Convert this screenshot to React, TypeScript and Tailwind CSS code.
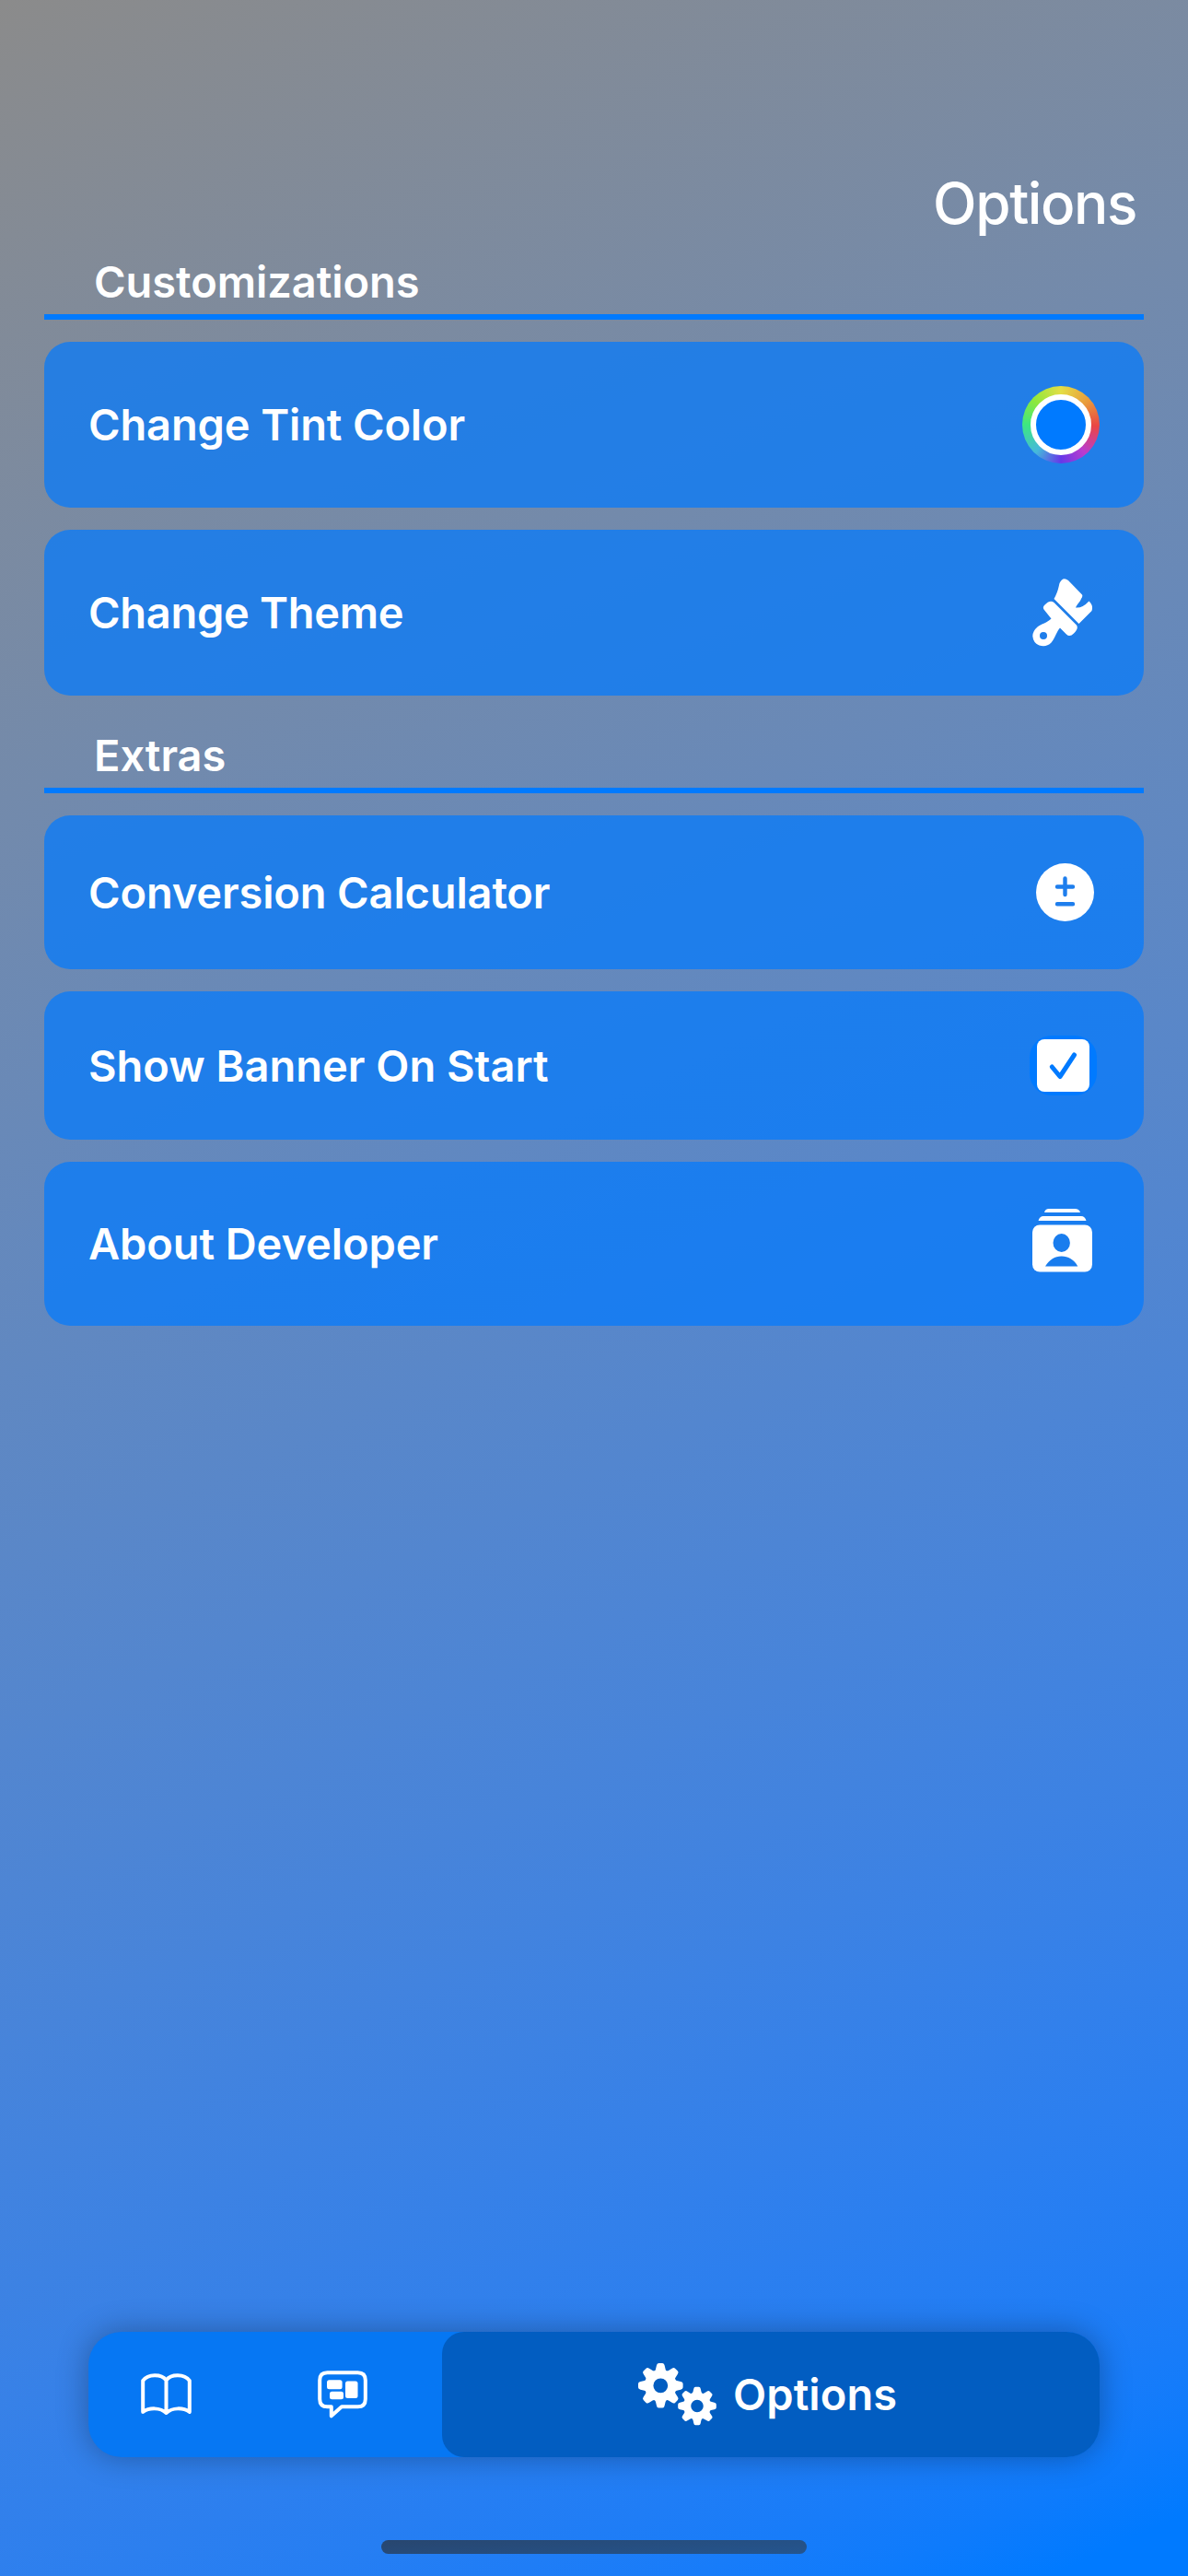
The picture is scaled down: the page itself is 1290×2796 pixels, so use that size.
import React from "react";

const Row = ({ label, labelClass, className, children }: { label: string; labelClass: string; className: string; children: React.ReactNode }) => (
  <button className={`flex w-full items-center justify-between rounded-[28px] bg-[#007aff]/70 pl-12 text-left ${className}`}>
    <span className={`whitespace-nowrap text-[47px] leading-[58px] font-semibold ${labelClass}`}>{label}</span>
    {children}
  </button>
);

const Heading = ({ label, className }: { label: string; className: string }) => (
  <h2 className={`flex items-end border-b-[6px] border-[#007aff] pb-[6px] text-[47px] leading-[58px] font-semibold tracking-[-0.05px] ${className}`}>{label}</h2>
);

const ColorWell = () => (
  <span className="flex size-[84px] items-center justify-center rounded-full bg-[conic-gradient(from_0deg,#e4de45,#e9993c_50deg,#ea4545_92deg,#b93ccf_140deg,#6638e8_180deg,#45b8dc_222deg,#3de882_270deg,#8de83c_312deg,#e4de45)]">
    <span className="size-[66px] rounded-full border-[6px] border-white bg-[#007aff]" />
  </span>
);

const Brush = () => (
  <svg className="h-[74px] w-[66px]" viewBox="0 0 66 74" fill="white">
    <path d="M23.5 22 C28 14 28.500 9 29.500 5 Q33-2.500 39 2 L54 17.500 Q55 19 53 22 C51.500 26 49 27 47 31.500 Q54 32.500 61.500 24.500 Q66.500 29 64.500 35 L50.500 49 Z" />
    <path fillRule="evenodd" d="M12.500 33.500 Q11 31 13 29 Q19 22.500 23.500 26 L48 50.500 Q50.500 54 45 59.500 Q40.500 64 37 60.500 L30 53.500 C26.500 57 25 64 20.500 69.500 Q15 75 7.500 72.500 Q1 70 .3 62.500 Q.3 57 5.500 52.500 C10 49 16 48 20.500 43.500 Z M12 58 A4 4 0 1 0 12 66 A4 4 0 1 0 12 58 Z" />
  </svg>
);

const PlusMinus = () => (
  <svg className="size-[63px]" viewBox="0 0 63 63">
    <circle cx="31.500" cy="31.500" r="31.500" fill="white" />
    <path d="M31.500 16.500 V34 M23 25.500 H40 M23 44.300 H40" stroke="#1e7eed" strokeWidth="4.400" strokeLinecap="round" />
  </svg>
);

const Checkbox = () => (
  <span className="flex h-[65px] w-[73px] items-center rounded-[24px] bg-[#007aff] pl-2">
    <svg className="size-[57px] rounded-lg bg-white" viewBox="0 0 57 57">
      <path d="M16.300 30 L25 40.500 L40.500 17" fill="none" stroke="#007aff" strokeWidth="5" strokeLinecap="round" strokeLinejoin="round" />
    </svg>
  </span>
);

const ContactCards = () => (
  <svg className="mb-[7px] h-[69px] w-[65px]" viewBox="0 0 65 69" fill="white">
    <path d="M13 4 Q14 0 18 0 H46 Q51 0 52 4Z M6.500 13 Q8 8 12 8 H53 Q57 8 58.500 13Z" />
    <rect y="17.500" width="65" height="51" rx="8" />
    <g fill="#197dee">
      <ellipse cx="31.700" cy="37" rx="9.200" ry="10" />
      <path d="M14 62.500 C19 55 24 51.500 31.700 51.500 C39 51.500 45 55 49.300 62.500 Z" />
    </g>
  </svg>
);

const Book = () => (
  <svg className="h-[46px] w-[55px]" viewBox="0 0 55 46" fill="none" stroke="white" strokeWidth="4" strokeLinecap="round" strokeLinejoin="round">
    <path d="M27.500 7.500 C22 .5 8 .5 2.200 8 V42 C9 37 21 37 27.500 43 C34 37 46 37 52.800 42 V8 C47 .5 33 .5 27.500 7.500 V43" />
  </svg>
);

const Bubble = () => (
  <svg className="h-[52px] w-[54px]" viewBox="0 0 54 52" fill="white">
    <path d="M10.500 2.200 H43.500 Q51.800 2.200 51.800 10.500 V31 Q51.800 39.300 43.500 39.300 H26 L14.800 49.300 V39.300 H10.500 Q2.200 39.300 2.200 31 V10.500 Q2.200 2.200 10.500 2.200 Z" fill="none" stroke="white" strokeWidth="4" strokeLinejoin="round" />
    <rect x="10" y="10.300" width="16.600" height="10" rx="2.500" />
    <rect x="13" y="22.800" width="15" height="8.500" rx="2.500" />
    <rect x="30" y="11.500" width="13.500" height="18.500" rx="2.500" />
  </svg>
);

const Gear = ({ x, y, r }: { x: number; y: number; r: number }) => (
  <g transform={`translate(${x} ${y}) scale(${r / 24})`}>
    {[0, 45, 90, 135, 180, 225, 270, 315].map((angle) => (
      <path key={angle} transform={`rotate(${angle})`} d="M-6.800-14 Q-5-17 -4.300-21.500 Q-4-24 -2-24 H2 Q4-24 4.300-21.500 Q5-17 6.800-14Z" fill="white" />
    ))}
    <circle r="12.500" fill="none" stroke="white" strokeWidth="9.400" />
  </g>
);

export default function App() {
  return (
    <main className="flex h-[2796px] w-[1290px] flex-col bg-[linear-gradient(155.23deg_in_oklab,#8b8b8b,#007aff_98%)] font-['Inter',sans-serif] text-white">
      <h1 className="mt-[184px] pr-[56px] text-right text-[62px] leading-[74px] font-medium tracking-[-1.4px]">Options</h1>

      <div className="mt-[17px] flex flex-col px-12">
        <Heading label="Customizations" className="h-[72px] pl-[54px]" />
        <div className="mt-6 flex flex-col gap-6">
          <Row label="Change Tint Color" labelClass="tracking-[-0.15px]" className="h-[180px] pr-12">
            <ColorWell />
          </Row>
          <Row label="Change Theme" labelClass="tracking-[-0.3px]" className="h-[180px] pr-[55px]">
            <Brush />
          </Row>
        </div>

        <Heading label="Extras" className="mt-[34px] h-[72px] pl-[54px]" />
        <div className="mt-6 flex flex-col gap-6">
          <Row label="Conversion Calculator" labelClass="tracking-[-0.15px]" className="h-[167px] pr-[54px]">
            <PlusMinus />
          </Row>
          <Row label="Show Banner On Start" labelClass="tracking-[0px]" className="h-[161px] pr-[51px]">
            <Checkbox />
          </Row>
          <Row label="About Developer" labelClass="tracking-[-0.1px]" className="h-[178px] pr-[56px]">
            <ContactCards />
          </Row>
        </div>
      </div>

      <nav className="mx-24 mt-auto mb-[90px] flex h-[136px] rounded-[36px] bg-[#0677f3] shadow-[0_0_34px_rgba(0,0,0,0.3)]">
        <button className="flex w-[168px] items-center justify-center"><Book /></button>
        <button className="flex w-[216px] items-center justify-center"><Bubble /></button>
        <button className="flex flex-1 items-center rounded-l-[24px] rounded-r-[36px] bg-[#025dc1] pl-[213px]">
          <svg className="h-[68px] w-[85px]" viewBox="0 0 85 68">
            <Gear x={24.3} y={24.3} r={24.3} />
            <Gear x={64} y={46.5} r={20.8} />
          </svg>
          <span className="ml-[18px] text-[47px] leading-[58px] font-semibold tracking-[0.1px]">Options</span>
        </button>
      </nav>
      <div className="mx-auto mb-6 h-[15px] w-[462px] shrink-0 rounded-full bg-[linear-gradient(175deg,#28466f,#24558f)]" />
    </main>
  );
}
